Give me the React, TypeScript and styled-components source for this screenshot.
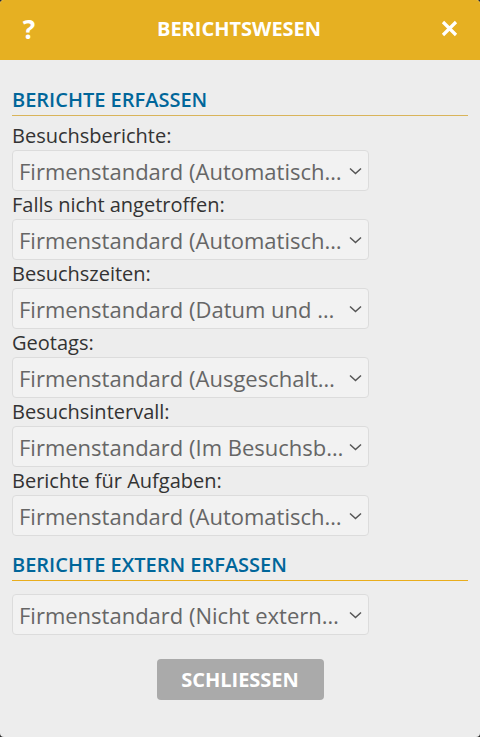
import styled, { createGlobalStyle } from 'styled-components';

const GlobalStyle = createGlobalStyle`
  html, body {
    margin: 0;
    padding: 0;
    background: #2b2b2b;
  }
  * {
    box-sizing: border-box;
  }
`;

const reportFields = [
  { label: 'Besuchsberichte:', value: 'Firmenstandard (Automatisch erstellen)' },
  { label: 'Falls nicht angetroffen:', value: 'Firmenstandard (Automatisch erstellen)' },
  { label: 'Besuchszeiten:', value: 'Firmenstandard (Datum und Uhrzeit)' },
  { label: 'Geotags:', value: 'Firmenstandard (Ausgeschaltet / keine Geotags)' },
  { label: 'Besuchsintervall:', value: 'Firmenstandard (Im Besuchsbericht)' },
  { label: 'Berichte für Aufgaben:', value: 'Firmenstandard (Automatisch erstellen)' },
];

function Chevron() {
  return (
    <svg width="13" height="8" viewBox="0 0 13 8">
      <path d="M1 1.5 L6.5 6.5 L12 1.5" fill="none" stroke="#555" strokeWidth="1.5" />
    </svg>
  );
}

function SelectField({ value }: { value: string }) {
  return (
    <SelectBox role="button">
      <SelectText>{value}</SelectText>
      <Chevron />
    </SelectBox>
  );
}

export default function App() {
  return (
    <>
      <GlobalStyle />
      <Dialog>
        <Header>
          <HeaderIcon>?</HeaderIcon>
          <Title>BERICHTSWESEN</Title>
          <HeaderIcon>
            <svg width="17" height="17" viewBox="0 0 17 17">
              <path d="M2 2 L15 15 M15 2 L2 15" stroke="#fff" strokeWidth="3.2" />
            </svg>
          </HeaderIcon>
        </Header>
        <Content>
          <SectionTitle>BERICHTE ERFASSEN</SectionTitle>
          <FieldList>
            {reportFields.map((field) => (
              <Field key={field.label}>
                <Label>{field.label}</Label>
                <SelectField value={field.value} />
              </Field>
            ))}
          </FieldList>
          <SectionTitle $accent $spaced>BERICHTE EXTERN ERFASSEN</SectionTitle>
          <ExternalSelect>
            <SelectField value="Firmenstandard (Nicht externe Erfassung)" />
          </ExternalSelect>
          <Footer>
            <CloseButton>SCHLIESSEN</CloseButton>
          </Footer>
        </Content>
      </Dialog>
    </>
  );
}

const Dialog = styled.div`
  width: 480px;
  height: 737px;
  background-color: #ededed;
  border-radius: 4px;
  overflow: hidden;
  font-family: 'Open Sans', 'Noto Sans', sans-serif;
  display: flex;
  flex-direction: column;
`;

const Header = styled.header`
  height: 60px;
  background-color: #e6b022;
  display: flex;
  align-items: center;
  justify-content: space-between;
  padding: 0 20px 0 18px;
  color: #fff;
`;

const HeaderIcon = styled.div`
  width: 22px;
  display: flex;
  justify-content: center;
  align-items: center;
  font-size: 26px;
  font-weight: 700;
  margin-top: -3px;
`;

const Title = styled.h1`
  margin: -3px 0 0 0;
  font-size: 20px;
  font-weight: 700;
`;

const Content = styled.div`
  padding: 0 12px;
  display: flex;
  flex-direction: column;
`;

const SectionTitle = styled.h2<{ $accent?: boolean; $spaced?: boolean }>`
  margin: ${(p) => (p.$spaced ? '17px' : '28px')} 0 0 0;
  font-size: 20px;
  line-height: 24px;
  font-weight: 600;
  color: #00669a;
  padding-bottom: 3px;
  border-bottom: 1px solid ${(p) => (p.$accent ? '#e9ad1c' : '#d9b45a')};
`;

const FieldList = styled.div`
  display: flex;
  flex-direction: column;
  margin-top: 8px;
  gap: 2px;
`;

const Field = styled.div`
  display: flex;
  flex-direction: column;
  gap: 2px;
`;

const Label = styled.div`
  font-size: 20px;
  line-height: 24px;
  color: #333;
`;

const SelectBox = styled.div`
  width: 357px;
  height: 41px;
  background-color: #f2f2f2;
  border: 1px solid #dcdcdc;
  border-radius: 4px;
  display: flex;
  align-items: center;
  padding: 0 6px 0 6px;
  gap: 4px;
  cursor: pointer;

  svg {
    flex-shrink: 0;
  }
`;

const SelectText = styled.span`
  flex: 1;
  min-width: 0;
  font-size: 22px;
  color: #666;
  white-space: nowrap;
  overflow: hidden;
  text-overflow: ellipsis;
`;

const ExternalSelect = styled.div`
  margin-top: 13px;
`;

const Footer = styled.div`
  display: flex;
  justify-content: center;
  margin-top: 24px;
`;

const CloseButton = styled.button`
  width: 167px;
  height: 41px;
  border: none;
  border-radius: 4px;
  background-color: #aaaaaa;
  color: #fff;
  font-family: 'Open Sans', 'Noto Sans', sans-serif;
  font-size: 20px;
  font-weight: 700;
  cursor: pointer;
`;
